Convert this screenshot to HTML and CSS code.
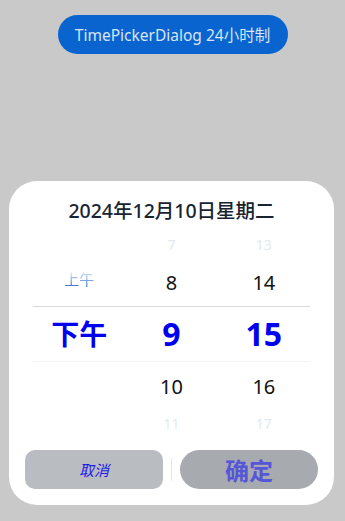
FILE: index.html
```html
<!DOCTYPE html>
<html lang="zh">
<head>
<meta charset="utf-8">
<link rel="stylesheet" href="styles.css">
</head>
<body>
<div class="top">
  <div class="open-btn">TimePickerDialog 24小时制</div>
</div>
<div class="dialog">
  <div class="title">2024年12月10日星期二</div>
  <div class="picker">
    <div class="row r-far-top">
      <div class="cell"></div>
      <div class="cell faint">7</div>
      <div class="cell faint">13</div>
    </div>
    <div class="row r-near-top">
      <div class="cell ampm">上午</div>
      <div class="cell near">8</div>
      <div class="cell near">14</div>
    </div>
    <div class="row r-sel">
      <div class="cell sel cjk">下午</div>
      <div class="cell sel">9</div>
      <div class="cell sel">15</div>
    </div>
    <div class="row r-near-bot">
      <div class="cell"></div>
      <div class="cell near">10</div>
      <div class="cell near">16</div>
    </div>
    <div class="row r-far-bot">
      <div class="cell"></div>
      <div class="cell faint">11</div>
      <div class="cell faint">17</div>
    </div>
  </div>
  <div class="actions">
    <div class="btn cancel">取消</div>
    <div class="sep"></div>
    <div class="btn confirm">确定</div>
  </div>
</div>
</body>
</html>
```
FILE: styles.css
```css
html, body {
  margin: 0;
  padding: 0;
}
body {
  width: 345px;
  height: 521px;
  background: #c9c9c9;
  font-family: "Noto Sans", "Noto Sans CJK SC", sans-serif;
  overflow: hidden;
}
.top {
  display: flex;
  justify-content: center;
  padding-top: 15px;
}
.open-btn {
  width: 230px;
  height: 39px;
  border-radius: 20px;
  background: #0a64d0;
  color: #d8e4f4;
  font-size: 15.5px;
  display: flex;
  align-items: center;
  justify-content: center;
}
.dialog {
  margin: 127px 0 0 9px;
  width: 325px;
  height: 324px;
  box-sizing: border-box;
  background: #fff;
  border-radius: 28px;
  padding: 0 16px;
  display: flex;
  flex-direction: column;
}
.title {
  height: 50px;
  padding-top: 6px;
  box-sizing: border-box;
  display: flex;
  align-items: center;
  justify-content: center;
  font-size: 19.5px;
  font-weight: 500;
  color: #182431;
}
.picker {
  margin: 0 8px;
  display: flex;
  flex-direction: column;
}
.row {
  display: grid;
  grid-template-columns: 1fr 1fr 1fr;
  align-items: center;
}
.cell {
  text-align: center;
  line-height: 1;
}
.r-far-top { height: 28px; }
.r-near-top { height: 47px; border-bottom: 1px solid #d9d9d9; }
.r-sel { height: 54px; border-bottom: 1px solid #f3f3f3; }
.r-near-bot { height: 50px; }
.r-far-bot { height: 24px; }
.faint {
  font-size: 14px;
  color: #e2e9f3;
}
.near {
  font-size: 20px;
  color: #111;
}
.ampm {
  font-size: 15px;
  margin-top: -6px;
  background: linear-gradient(to bottom, #dcebf8 0%, #8fb4e6 45%, #2f6cc8 100%);
  -webkit-background-clip: text;
  background-clip: text;
  color: transparent;
}
.sel {
  font-size: 32px;
  font-weight: 700;
  color: #0000f0;
}
.sel.cjk {
  font-size: 28px;
}
.actions {
  margin-top: auto;
  margin-bottom: 16px;
  display: flex;
  align-items: center;
  height: 39px;
}
.btn {
  height: 39px;
  width: 138px;
  display: flex;
  align-items: center;
  justify-content: center;
}
.cancel {
  background: #b9bcc1;
  border-radius: 10px;
  color: #1e1ee6;
  font-style: italic;
  font-size: 15px;
}
.sep {
  width: 1px;
  height: 23px;
  background: #e4e6e8;
  margin: 0 8px;
}
.confirm {
  background: #a7aaae;
  border-radius: 20px;
  color: #5656d8;
  font-weight: 700;
  font-size: 24px;
}
```
